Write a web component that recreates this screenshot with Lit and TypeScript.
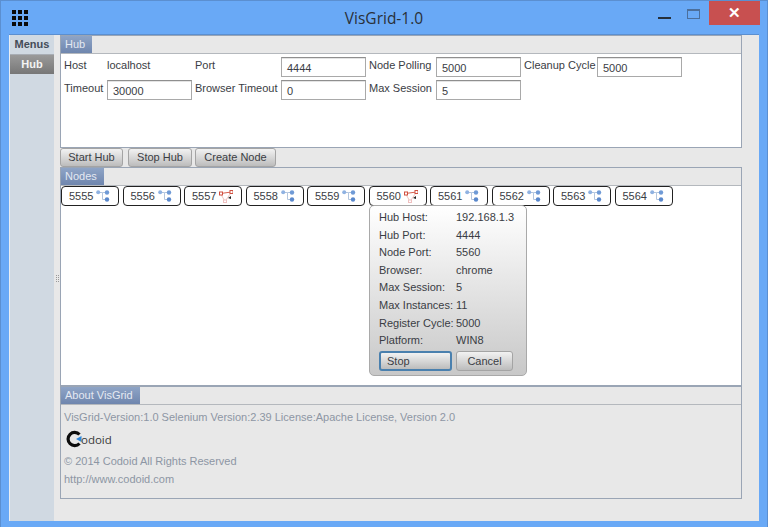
import { LitElement, html, css, svg } from 'lit';
import { customElement } from 'lit/decorators.js';

const nodes = [
  { port: 5555, up: true }, { port: 5556, up: true }, { port: 5557, up: false },
  { port: 5558, up: true }, { port: 5559, up: true }, { port: 5560, up: false },
  { port: 5561, up: true }, { port: 5562, up: true }, { port: 5563, up: true },
  { port: 5564, up: true },
];

const details = [
  ['Hub Host:', '192.168.1.3'], ['Hub Port:', '4444'], ['Node Port:', '5560'],
  ['Browser:', 'chrome'], ['Max Session:', '5'], ['Max Instances:', '11'],
  ['Register Cycle:', '5000'], ['Platform:', 'WIN8'],
];

const blueIcon = svg`<svg class="ico" width="14" height="12" viewBox="0 0 14 12">
  <path d="M3 2.5H6.5V9.5H10" fill="none" stroke="#b4c6de" stroke-width="1"/>
  <path d="M6.5 2.5H10" fill="none" stroke="#b4c6de" stroke-width="1"/>
  <circle cx="2.2" cy="2.3" r="2" fill="#8fb2e2"/>
  <circle cx="11" cy="2.5" r="2.2" fill="#6f9ad6"/>
  <circle cx="11" cy="9.5" r="2.2" fill="#5a88cc"/>
</svg>`;

const redIcon = svg`<svg class="ico" width="14" height="13" viewBox="0 0 14 13">
  <path d="M1.5 3.5L12.5 2" fill="none" stroke="#d8604f" stroke-width="1"/>
  <path d="M1.5 3.5L6 11.5M12.5 2L6 11.5" fill="none" stroke="#f0c4bc" stroke-width="1"/>
  <rect x="0.5" y="2" width="3" height="3" fill="#fff" stroke="#d05040"/>
  <rect x="11" y="0.5" width="3" height="3" fill="#fff" stroke="#d05040"/>
  <rect x="4.5" y="10" width="3" height="2.5" fill="#fff" stroke="#f0c0c0"/>
  <path d="M9 8L12 6L12 9Z" fill="#222"/>
</svg>`;

@customElement('app-root')
export class AppRoot extends LitElement {
  static styles = css`
    :host {
      display: flex;
      flex-direction: column;
      width: 768px;
      height: 527px;
      box-sizing: border-box;
      background: #69a9f6;
      border: 1px solid #5b8fd0;
      border-bottom: none;
      font-family: "Liberation Sans", Arial, sans-serif;
      font-size: 11px;
      color: #3a3d44;
      overflow: hidden;
    }
    .titlebar {
      height: 33px;
      flex: none;
      display: grid;
      grid-template-columns: 1fr auto 1fr;
      align-items: start;
    }
    .grid-icon {
      margin: 9px 0 0 11px;
      display: grid;
      grid-template-columns: repeat(3, 4px);
      grid-auto-rows: 4px;
      gap: 2px;
      justify-self: start;
    }
    .grid-icon i { background: #0a0a0a; }
    .title {
      font-family: "Open Sans", sans-serif;
      font-size: 15.5px;
      line-height: 20px;
      margin-top: 7px;
      color: #2a3038;
    }
    .controls { display: flex; align-items: flex-start; justify-content: flex-end; margin-right: 7px; }
    .min { width: 13px; height: 2px; background: #26303c; margin: 16px 16px 0 0; }
    .max {
      width: 11px; height: 7px;
      border: 1px solid #4c6f9c; border-top-width: 2px;
      margin: 8px 9px 0 0;
    }
    .close {
      width: 51px; height: 24px;
      background: #c85050;
      color: #fff;
      text-align: center;
      line-height: 24px;
      font-size: 15px;
      font-weight: bold;
    }
    .client {
      flex: 1;
      display: flex;
      margin: 0 8px 6px 8px;
      border-top: 1px solid #5b8fd0;
      min-height: 0;
    }
    .sidebar {
      width: 44px;
      flex: none;
      background: #d0d9e2;
      border-left: 1px solid #e8eef4;
    }
    .sidebar .head {
      height: 19px;
      line-height: 19px;
      text-align: center;
      font-weight: bold;
      color: #444c58;
      border-bottom: 1px solid #a8adb4;
    }
    .sidebar .item {
      height: 19px;
      line-height: 18px;
      text-align: center;
      font-weight: bold;
      color: #f4f4f4;
      background: linear-gradient(#9a9a9a, #777);
    }
    .main {
      flex: 1;
      background: #e8e8e8;
      display: flex;
      min-width: 0;
    }
    .split {
      width: 6px;
      flex: none;
      display: flex;
      align-items: center;
      justify-content: center;
    }
    .split b { width: 3px; height: 7px; border-left: 1px dotted #999; border-right: 1px dotted #999; box-sizing: border-box; }
    .stack {
      width: 682px;
      flex: none;
      display: flex;
      flex-direction: column;
    }
    .panel { border: 1px solid #9aa5b5; box-sizing: border-box; }
    .tabbar { height: 17px; background: #e8e8e8; border-bottom: 1px solid #b4b8bd; display: flex; }
    .tab {
      background: linear-gradient(#8ea4c6, #6f86ae);
      color: #e4e9f2;
      padding: 0 7px 0 4px;
      line-height: 17px;
    }
    .hub { height: 113px; display: flex; flex-direction: column; }
    .hub .body { flex: 1; background: #fff; padding: 3px 3px 0 3px; }
    .form {
      display: grid;
      grid-template-columns: 40px 85px 83px 85px 64px 85px 70px 85px;
      column-gap: 3px;
      row-gap: 3px;
      grid-auto-rows: 20px;
    }
    .form label, .form span { line-height: 16px; white-space: nowrap; }
    .field {
      box-sizing: border-box;
      height: 20px;
      border: 1px solid #a9a9a9;
      border-top-color: #8f8f8f;
      background: #fff;
      padding: 3px 5px 0;
      line-height: 15px;
      box-shadow: inset 0 1px 0 #e4e4e4;
    }
    .actions { height: 19px; display: flex; gap: 4px; align-items: flex-end; flex: none; }
    .btn {
      box-sizing: border-box;
      height: 19px;
      border: 1px solid #a4a4a4;
      border-radius: 3px;
      background: linear-gradient(#f2f2f2, #d2d2d2 60%, #bcbcbc);
      text-align: center;
      line-height: 17px;
    }
    .start { width: 63px; }
    .stop-hub { width: 64px; margin-left: 1px; margin-right: -1px; }
    .create { width: 81px; }
    .nodes { height: 220px; position: relative; display: flex; flex-direction: column; border-bottom-width: 2px; }
    .nodes .body { flex: 1; background: #fff; }
    .chips { display: flex; gap: 3.5px; }
    .chip {
      box-sizing: border-box;
      width: 58px;
      height: 20px;
      border: 1px solid #222;
      border-radius: 4px;
      background: #fff;
      display: flex;
      align-items: center;
      padding-left: 7px;
      gap: 3px;
    }
    .ico { flex: none; }
    .popup {
      position: absolute;
      left: 308px;
      top: 37px;
      width: 158px;
      height: 171px;
      box-sizing: border-box;
      border: 1px solid #a9a9a9;
      border-radius: 5px;
      background: linear-gradient(#fff, #c8c8c8);
      padding: 3px 9px 0;
    }
    .row { display: flex; height: 17.6px; line-height: 17.6px; white-space: nowrap; }
    .row .k { width: 77px; flex: none; }
    .pop-actions { display: flex; gap: 4px; margin-top: 1px; }
    .pop-actions .btn { height: 20px; line-height: 18px; }
    .pop-actions .stop { width: 73px; border: 2px solid #4a80ae; border-radius: 3px; line-height: 16px; text-align: left; padding-left: 6px; }
    .pop-actions .cancel { width: 57px; }
    .about { height: 112px; display: flex; flex-direction: column; border-top: none; }
    .about .body { flex: 1; padding: 3px 4px 0 3px; color: #8d96a4; }
    .about p { margin: 0; line-height: 18px; white-space: nowrap; }
    .logo {
      display: flex;
      align-items: center;
      height: 26px;
      margin-left: 1px;
      color: #3a3a3a;
      font-size: 11.5px;
      font-family: "Open Sans", sans-serif;
    }
    .logo span { margin-left: -3px; }
  `;

  render() {
    return html`
      <div class="titlebar">
        <div class="grid-icon">${Array.from({ length: 9 }, () => html`<i></i>`)}</div>
        <div class="title">VisGrid-1.0</div>
        <div class="controls">
          <div class="min"></div>
          <div class="max"></div>
          <div class="close">✕</div>
        </div>
      </div>
      <div class="client">
        <div class="sidebar">
          <div class="head">Menus</div>
          <div class="item">Hub</div>
        </div>
        <div class="main">
          <div class="split"><b></b></div>
          <div class="stack">
            <section class="panel hub">
              <div class="tabbar"><div class="tab">Hub</div></div>
              <div class="body">
                <div class="form">
                  <label>Host</label><span>localhost</span>
                  <label>Port</label><div class="field">4444</div>
                  <label>Node Polling</label><div class="field">5000</div>
                  <label>Cleanup Cycle</label><div class="field">5000</div>
                  <label>Timeout</label><div class="field">30000</div>
                  <label>Browser Timeout</label><div class="field">0</div>
                  <label>Max Session</label><div class="field">5</div>
                </div>
              </div>
            </section>
            <div class="actions">
              <div class="btn start">Start Hub</div>
              <div class="btn stop-hub">Stop Hub</div>
              <div class="btn create">Create Node</div>
            </div>
            <section class="panel nodes">
              <div class="tabbar"><div class="tab">Nodes</div></div>
              <div class="body">
                <div class="chips">
                  ${nodes.map((n) => html`<div class="chip">${n.port}${n.up ? blueIcon : redIcon}</div>`)}
                </div>
              </div>
              <div class="popup">
                ${details.map(([k, v]) => html`<div class="row"><span class="k">${k}</span><span>${v}</span></div>`)}
                <div class="pop-actions">
                  <div class="btn stop">Stop</div>
                  <div class="btn cancel">Cancel</div>
                </div>
              </div>
            </section>
            <section class="panel about">
              <div class="tabbar"><div class="tab">About VisGrid</div></div>
              <div class="body">
                <p>VisGrid-Version:1.0 Selenium Version:2.39 License:Apache License, Version 2.0</p>
                <div class="logo">
                  <svg width="19" height="18" viewBox="0 0 19 18">
                    <path d="M14.5 4.5A6.6 6.6 0 1 0 14.5 13.5" fill="none" stroke="#0c0c0c" stroke-width="3.2"/>
                    <path d="M11 9L16.5 6V12Z" fill="#2f86d8"/>
                  </svg>
                  <span>odoid</span>
                </div>
                <p>© 2014 Codoid All Rights Reserved</p>
                <p>http://www.codoid.com</p>
              </div>
            </section>
          </div>
        </div>
      </div>
    `;
  }
}
